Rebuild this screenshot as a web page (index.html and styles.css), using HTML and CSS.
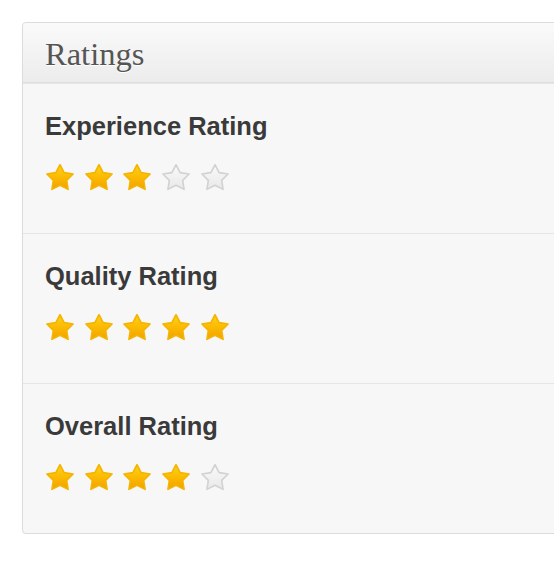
FILE: index.html
```html
<!DOCTYPE html>
<html>
<head>
<meta charset="utf-8">
<link rel="stylesheet" href="styles.css">
</head>
<body>
<svg width="0" height="0" class="defs">
  <defs>
    <linearGradient id="gold" x1="0" y1="0" x2="0" y2="1">
      <stop offset="0" stop-color="#ffd21a"/>
      <stop offset="0.55" stop-color="#fbb800"/>
      <stop offset="1" stop-color="#f0a000"/>
    </linearGradient>
    <linearGradient id="grey" x1="0" y1="0" x2="0" y2="1">
      <stop offset="0" stop-color="#fafafa"/>
      <stop offset="1" stop-color="#e8e8e8"/>
    </linearGradient>
    <symbol id="star" viewBox="0 0 24 24">
      <polygon points="12,1.8 15.29,8.07 22.46,9.2 17.33,14.33 18.47,21.5 12,18.2 5.53,21.5 6.67,14.33 1.54,9.2 8.71,8.07"/>
    </symbol>
  </defs>
</svg>
<div class="panel">
  <div class="panel-header">Ratings</div>
  <div class="section">
    <div class="label">Experience Rating</div>
    <div class="stars">
      <svg class="star on"><use href="#star"/></svg>
      <svg class="star on"><use href="#star"/></svg>
      <svg class="star on"><use href="#star"/></svg>
      <svg class="star off"><use href="#star"/></svg>
      <svg class="star off"><use href="#star"/></svg>
    </div>
  </div>
  <div class="section">
    <div class="label">Quality Rating</div>
    <div class="stars">
      <svg class="star on"><use href="#star"/></svg>
      <svg class="star on"><use href="#star"/></svg>
      <svg class="star on"><use href="#star"/></svg>
      <svg class="star on"><use href="#star"/></svg>
      <svg class="star on"><use href="#star"/></svg>
    </div>
  </div>
  <div class="section">
    <div class="label">Overall Rating</div>
    <div class="stars">
      <svg class="star on"><use href="#star"/></svg>
      <svg class="star on"><use href="#star"/></svg>
      <svg class="star on"><use href="#star"/></svg>
      <svg class="star on"><use href="#star"/></svg>
      <svg class="star off"><use href="#star"/></svg>
    </div>
  </div>
</div>
</body>
</html>
```
FILE: styles.css
```css
html, body {
  margin: 0;
  padding: 0;
  background: #fff;
  overflow: hidden;
}
body {
  padding: 22px 0 0 22px;
  font-family: "Liberation Sans", Arial, sans-serif;
}
.defs {
  position: absolute;
  width: 0;
  height: 0;
}
.panel {
  width: 600px;
  border: 1px solid #dcdcdc;
  border-radius: 4px;
  background: #f7f7f7;
  box-shadow: 0 1px 1px rgba(0,0,0,0.04);
}
.panel-header {
  height: 60px;
  box-sizing: border-box;
  padding: 13px 0 0 22px;
  font-family: "Liberation Serif", Georgia, serif;
  font-size: 32.5px;
  line-height: 36px;
  color: #555;
  text-shadow: 0 1px 0 #fff;
  background: linear-gradient(#fafafa, #ececec);
  border-bottom: 1px solid #dedede;
  border-radius: 4px 4px 0 0;
}
.section {
  padding: 28px 0 40px 22px;
  border-top: 1px solid #e6e6e6;
}
.section:first-of-type {
  border-top-color: #fff;
  padding-top: 29px;
}
.label {
  font-size: 25.5px;
  line-height: 28px;
  font-weight: bold;
  color: #3a3a3a;
}
.stars {
  display: flex;
  gap: 8.7px;
  margin-top: 22px;
  height: 31px;
}
.star {
  width: 30px;
  height: 31px;
  stroke-linejoin: round;
  stroke-width: 1.3;
}
.star.on {
  fill: url(#gold);
  stroke: #f5b400;
}
.star.off {
  fill: url(#grey);
  stroke: #d2d2d2;
}
```
